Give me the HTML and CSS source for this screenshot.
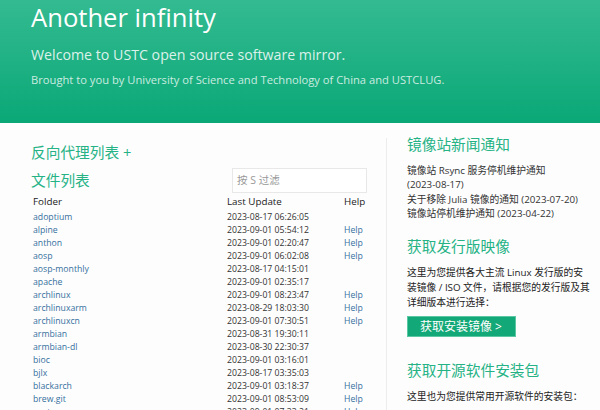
FILE: index.html
```html
<!DOCTYPE html>
<html lang="zh-CN">
<head>
  <meta charset="UTF-8" />
  <title>USTC Open Source Software Mirror</title>
  <link rel="stylesheet" href="styles.css">
</head>
<body>
  <header class="hero">
    <h1>Another infinity</h1>
    <p class="lead">Welcome to USTC open source software mirror.</p>
    <p class="sub">Brought to you by University of Science and Technology of China and USTCLUG.</p>
  </header>

  <div class="main">
    <div class="left">
      <h2 class="proxy">反向代理列表 +</h2>
      <div class="list-head">
        <h2>文件列表</h2>
        <input type="text" class="filter" placeholder="按 S 过滤" />
      </div>
      <table class="files">
        <colgroup>
          <col class="c-folder" />
          <col class="c-date" />
          <col class="c-help" />
        </colgroup>
        <thead>
          <tr><th>Folder</th><th>Last Update</th><th>Help</th></tr>
        </thead>
        <tbody>
          <tr><td><a href="#">adoptium</a></td><td>2023-08-17 06:26:05</td><td></td></tr>
          <tr><td><a href="#">alpine</a></td><td>2023-09-01 05:54:12</td><td><a href="#">Help</a></td></tr>
          <tr><td><a href="#">anthon</a></td><td>2023-09-01 02:20:47</td><td><a href="#">Help</a></td></tr>
          <tr><td><a href="#">aosp</a></td><td>2023-09-01 06:02:08</td><td><a href="#">Help</a></td></tr>
          <tr><td><a href="#">aosp-monthly</a></td><td>2023-08-17 04:15:01</td><td></td></tr>
          <tr><td><a href="#">apache</a></td><td>2023-09-01 02:35:17</td><td></td></tr>
          <tr><td><a href="#">archlinux</a></td><td>2023-09-01 08:23:47</td><td><a href="#">Help</a></td></tr>
          <tr><td><a href="#">archlinuxarm</a></td><td>2023-08-29 18:03:30</td><td><a href="#">Help</a></td></tr>
          <tr><td><a href="#">archlinuxcn</a></td><td>2023-09-01 07:30:51</td><td><a href="#">Help</a></td></tr>
          <tr><td><a href="#">armbian</a></td><td>2023-08-31 19:30:11</td><td></td></tr>
          <tr><td><a href="#">armbian-dl</a></td><td>2023-08-30 22:30:37</td><td></td></tr>
          <tr><td><a href="#">bioc</a></td><td>2023-09-01 03:16:01</td><td></td></tr>
          <tr><td><a href="#">bjlx</a></td><td>2023-08-17 03:35:03</td><td></td></tr>
          <tr><td><a href="#">blackarch</a></td><td>2023-09-01 03:18:37</td><td><a href="#">Help</a></td></tr>
          <tr><td><a href="#">brew.git</a></td><td>2023-09-01 08:53:09</td><td><a href="#">Help</a></td></tr>
          <tr><td><a href="#">centos</a></td><td>2023-09-01 07:33:21</td><td><a href="#">Help</a></td></tr>
        </tbody>
      </table>
    </div>

    <div class="right">
      <h2 class="news-title">镜像站新闻通知</h2>
      <ul class="news">
        <li><a href="#">镜像站 Rsync 服务停机维护通知</a> <span class="date">(2023-08-17)</span></li>
        <li><a href="#">关于移除 Julia 镜像的通知</a> <span class="date">(2023-07-20)</span></li>
        <li><a href="#">镜像站停机维护通知</a> <span class="date">(2023-04-22)</span></li>
      </ul>

      <h2 class="sec">获取发行版映像</h2>
      <p>这里为您提供各大主流 Linux 发行版的安装镜像 / ISO 文件，请根据您的发行版及其详细版本进行选择：</p>
      <a class="btn" href="#">获取安装镜像 &gt;</a>

      <h2 class="sec">获取开源软件安装包</h2>
      <p>这里也为您提供常用开源软件的安装包：</p>
      <a class="btn" href="#">获取软件安装包 &gt;</a>
    </div>
  </div>
</body>
</html>
```

FILE: styles.css
```css
body {
  margin: 0;
  font-family: "Open Sans", "Noto Sans CJK SC", sans-serif;
  background: #fdfdfd;
  color: #333;
  font-size: 10px;
}

a {
  color: #36709e;
  text-decoration: none;
}

.hero {
  background: linear-gradient(to bottom, #34ba91, #0aa876);
  color: white;
  height: 123px;
  padding: 0 31px;
  box-sizing: border-box;
  overflow: hidden;
}

.hero h1 {
  margin: 0;
  font-size: 25.6px;
  font-weight: 400;
  line-height: 36px;
}

.hero .lead {
  margin: 9px 0 0;
  font-size: 14.2px;
  line-height: 20px;
  color: rgba(255,255,255,0.85);
}

.hero .sub {
  margin: 7px 0 0;
  font-size: 11.2px;
  line-height: 16px;
  color: rgba(255,255,255,0.78);
}

.main {
  display: flex;
  padding-top: 15px;
  padding-left: 31px;
}

.left {
  width: 336px;
}

.right {
  margin-left: 19px;
  border-left: 1px solid #ececec;
  padding-left: 20px;
  width: 185px;
  min-height: 300px;
  font-size: 9.75px;
}

h2 {
  color: #25b386;
  font-weight: 400;
  font-size: 14.7px;
  margin: 0;
}

.proxy {
  line-height: 29px;
}

.list-head {
  display: flex;
  justify-content: space-between;
  align-items: center;
  height: 26px;
}

.list-head h2 {
  line-height: 26px;
}

.filter {
  width: 135px;
  height: 25px;
  box-sizing: border-box;
  border: 1px solid #e8e8e8;
  padding: 0 4px;
  font-family: inherit;
  font-size: 10.5px;
  color: #555;
  background: #fff;
  outline: none;
}

.filter::placeholder {
  color: #999;
}

.files {
  width: 336px;
  table-layout: fixed;
  border-collapse: collapse;
}

.files .c-folder { width: 194px; }
.files .c-date { width: 117px; }
.files .c-help { width: 25px; }

.files th {
  text-align: left;
  font-weight: 400;
  color: #222;
  font-size: 9.8px;
  line-height: 18px;
  padding: 0 0 0 2px;
}

.files td {
  font-size: 8.7px;
  line-height: 13px;
  padding: 0 0 0 2px;
  white-space: nowrap;
}

.right h2 {
  font-size: 14.7px;
  line-height: 16px;
}

.right .news-title {
  margin-top: -2px;
}

.news {
  list-style: none;
  margin: 12px 0 0;
  padding: 0;
  line-height: 14.3px;
}

.news a {
  color: #333;
}

.news .date {
  white-space: nowrap;
}

.right .sec {
  margin-top: 17px;
}

.right p {
  margin: 10.5px 0 0;
  line-height: 15px;
  color: #222;
}

.btn {
  display: block;
  width: fit-content;
  margin-top: 6.5px;
  background: #13a877;
  color: white;
  font-size: 12px;
  line-height: 19px;
  padding: 0 13px 0 12px;
  border: 1px solid #5cc7a2;
}

.btn + .sec {
  margin-top: 25px;
}
```
